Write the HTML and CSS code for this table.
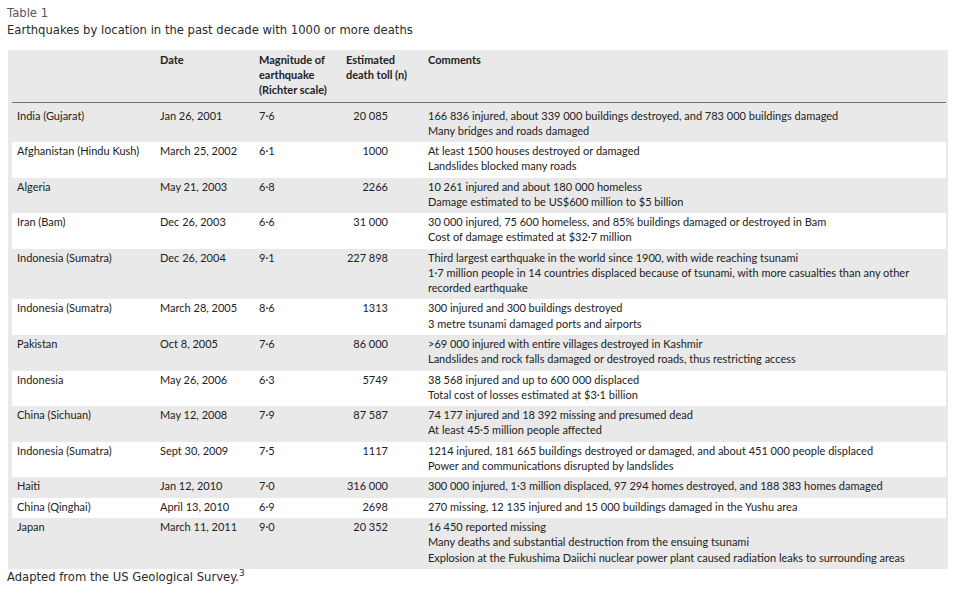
FILE: index.html
```html
<!DOCTYPE html>
<html>
<head>
<meta charset="utf-8">
<link rel="stylesheet" href="styles.css">
</head>
<body>
<div class="caption">
  <div class="label">Table 1</div>
  <div class="title">Earthquakes by location in the past decade with 1000 or more deaths</div>
</div>
<div class="panel">
<table class="quakes">
  <colgroup>
    <col class="c-loc"><col class="c-date"><col class="c-mag"><col class="c-toll"><col class="c-com">
  </colgroup>
  <thead>
    <tr>
      <th></th>
      <th>Date</th>
      <th>Magnitude of<br>earthquake<br>(Richter scale)</th>
      <th>Estimated<br>death toll (n)</th>
      <th>Comments</th>
    </tr>
  </thead>
  <tbody>
    <tr class="shade first">
      <td>India (Gujarat)</td><td>Jan 26, 2001</td><td>7·6</td><td class="num">20 085</td>
      <td>166 836 injured, about 339 000 buildings destroyed, and 783 000 buildings damaged<br>Many bridges and roads damaged</td>
    </tr>
    <tr class="light">
      <td>Afghanistan (Hindu Kush)</td><td>March 25, 2002</td><td>6·1</td><td class="num">1000</td>
      <td>At least 1500 houses destroyed or damaged<br>Landslides blocked many roads</td>
    </tr>
    <tr class="shade">
      <td>Algeria</td><td>May 21, 2003</td><td>6·8</td><td class="num">2266</td>
      <td>10 261 injured and about 180 000 homeless<br>Damage estimated to be US$600 million to $5 billion</td>
    </tr>
    <tr class="light">
      <td>Iran (Bam)</td><td>Dec 26, 2003</td><td>6·6</td><td class="num">31 000</td>
      <td>30 000 injured, 75 600 homeless, and 85% buildings damaged or destroyed in Bam<br>Cost of damage estimated at $32·7 million</td>
    </tr>
    <tr class="shade">
      <td>Indonesia (Sumatra)</td><td>Dec 26, 2004</td><td>9·1</td><td class="num">227 898</td>
      <td>Third largest earthquake in the world since 1900, with wide reaching tsunami<br>1·7 million people in 14 countries displaced because of tsunami, with more casualties than any other recorded earthquake</td>
    </tr>
    <tr class="light">
      <td>Indonesia (Sumatra)</td><td>March 28, 2005</td><td>8·6</td><td class="num">1313</td>
      <td>300 injured and 300 buildings destroyed<br>3 metre tsunami damaged ports and airports</td>
    </tr>
    <tr class="shade">
      <td>Pakistan</td><td>Oct 8, 2005</td><td>7·6</td><td class="num">86 000</td>
      <td>&gt;69 000 injured with entire villages destroyed in Kashmir<br>Landslides and rock falls damaged or destroyed roads, thus restricting access</td>
    </tr>
    <tr class="light">
      <td>Indonesia</td><td>May 26, 2006</td><td>6·3</td><td class="num">5749</td>
      <td>38 568 injured and up to 600 000 displaced<br>Total cost of losses estimated at $3·1 billion</td>
    </tr>
    <tr class="shade">
      <td>China (Sichuan)</td><td>May 12, 2008</td><td>7·9</td><td class="num">87 587</td>
      <td>74 177 injured and 18 392 missing and presumed dead<br>At least 45·5 million people affected</td>
    </tr>
    <tr class="light">
      <td>Indonesia (Sumatra)</td><td>Sept 30, 2009</td><td>7·5</td><td class="num">1117</td>
      <td>1214 injured, 181 665 buildings destroyed or damaged, and about 451 000 people displaced<br>Power and communications disrupted by landslides</td>
    </tr>
    <tr class="shade">
      <td>Haiti</td><td>Jan 12, 2010</td><td>7·0</td><td class="num">316 000</td>
      <td>300 000 injured, 1·3 million displaced, 97 294 homes destroyed, and 188 383 homes damaged</td>
    </tr>
    <tr class="light">
      <td>China (Qinghai)</td><td>April 13, 2010</td><td>6·9</td><td class="num">2698</td>
      <td>270 missing, 12 135 injured and 15 000 buildings damaged in the Yushu area</td>
    </tr>
    <tr class="shade">
      <td>Japan</td><td>March 11, 2011</td><td>9·0</td><td class="num">20 352</td>
      <td>16 450 reported missing<br>Many deaths and substantial destruction from the ensuing tsunami<br>Explosion at the Fukushima Daiichi nuclear power plant caused radiation leaks to surrounding areas</td>
    </tr>
  </tbody>
</table>
</div>
<div class="source">Adapted from the US Geological Survey.<sup>3</sup></div>
</body>
</html>
```
FILE: styles.css
```css
html, body {
  margin: 0;
  padding: 0;
  background: #ffffff;
}

body {
  width: 953px;
  height: 595px;
  overflow: hidden;
}

.caption {
  padding: 4.5px 0 0 7px;
  font-family: "DejaVu Sans", Verdana, sans-serif;
  font-size: 11.6px;
  line-height: 17px;
  color: #2a2a2a;
}

.caption .label {
  color: #555;
}

.panel {
  margin: 11.5px 5px 0 8px;
  padding: 0 2px 0 4px;
  background: #e9e9e9;
}

.quakes {
  width: 100%;
  border-collapse: collapse;
  table-layout: fixed;
  font-family: Lato, "Open Sans", sans-serif;
  font-size: 11px;
  line-height: 15.1px;
  color: #222;
}

.c-loc { width: 143px; }
.c-date { width: 99px; }
.c-mag { width: 87px; }
.c-toll { width: 82px; }
.c-com { width: auto; }

.quakes th {
  text-align: left;
  vertical-align: top;
  font-weight: bold;
  line-height: 15px;
  padding: 2px 5px 5px;
  border-bottom: 1px solid #707070;
}

.quakes td {
  vertical-align: top;
  padding: 1px 5px 4.4px;
}

.quakes td.num {
  text-align: right;
  padding-right: 35px;
}

.quakes tr.first td {
  padding-top: 4.5px;
}

.quakes tr.shade {
  background: #e9e9e9;
}

.quakes tr.light {
  background: #ffffff;
}

.source {
  padding: 0 0 0 7px;
  font-family: "DejaVu Sans", Verdana, sans-serif;
  font-size: 11.6px;
  line-height: 16px;
  color: #2a2a2a;
}

.source sup {
  font-size: 9px;
  line-height: 0;
  vertical-align: 5px;
}
```
